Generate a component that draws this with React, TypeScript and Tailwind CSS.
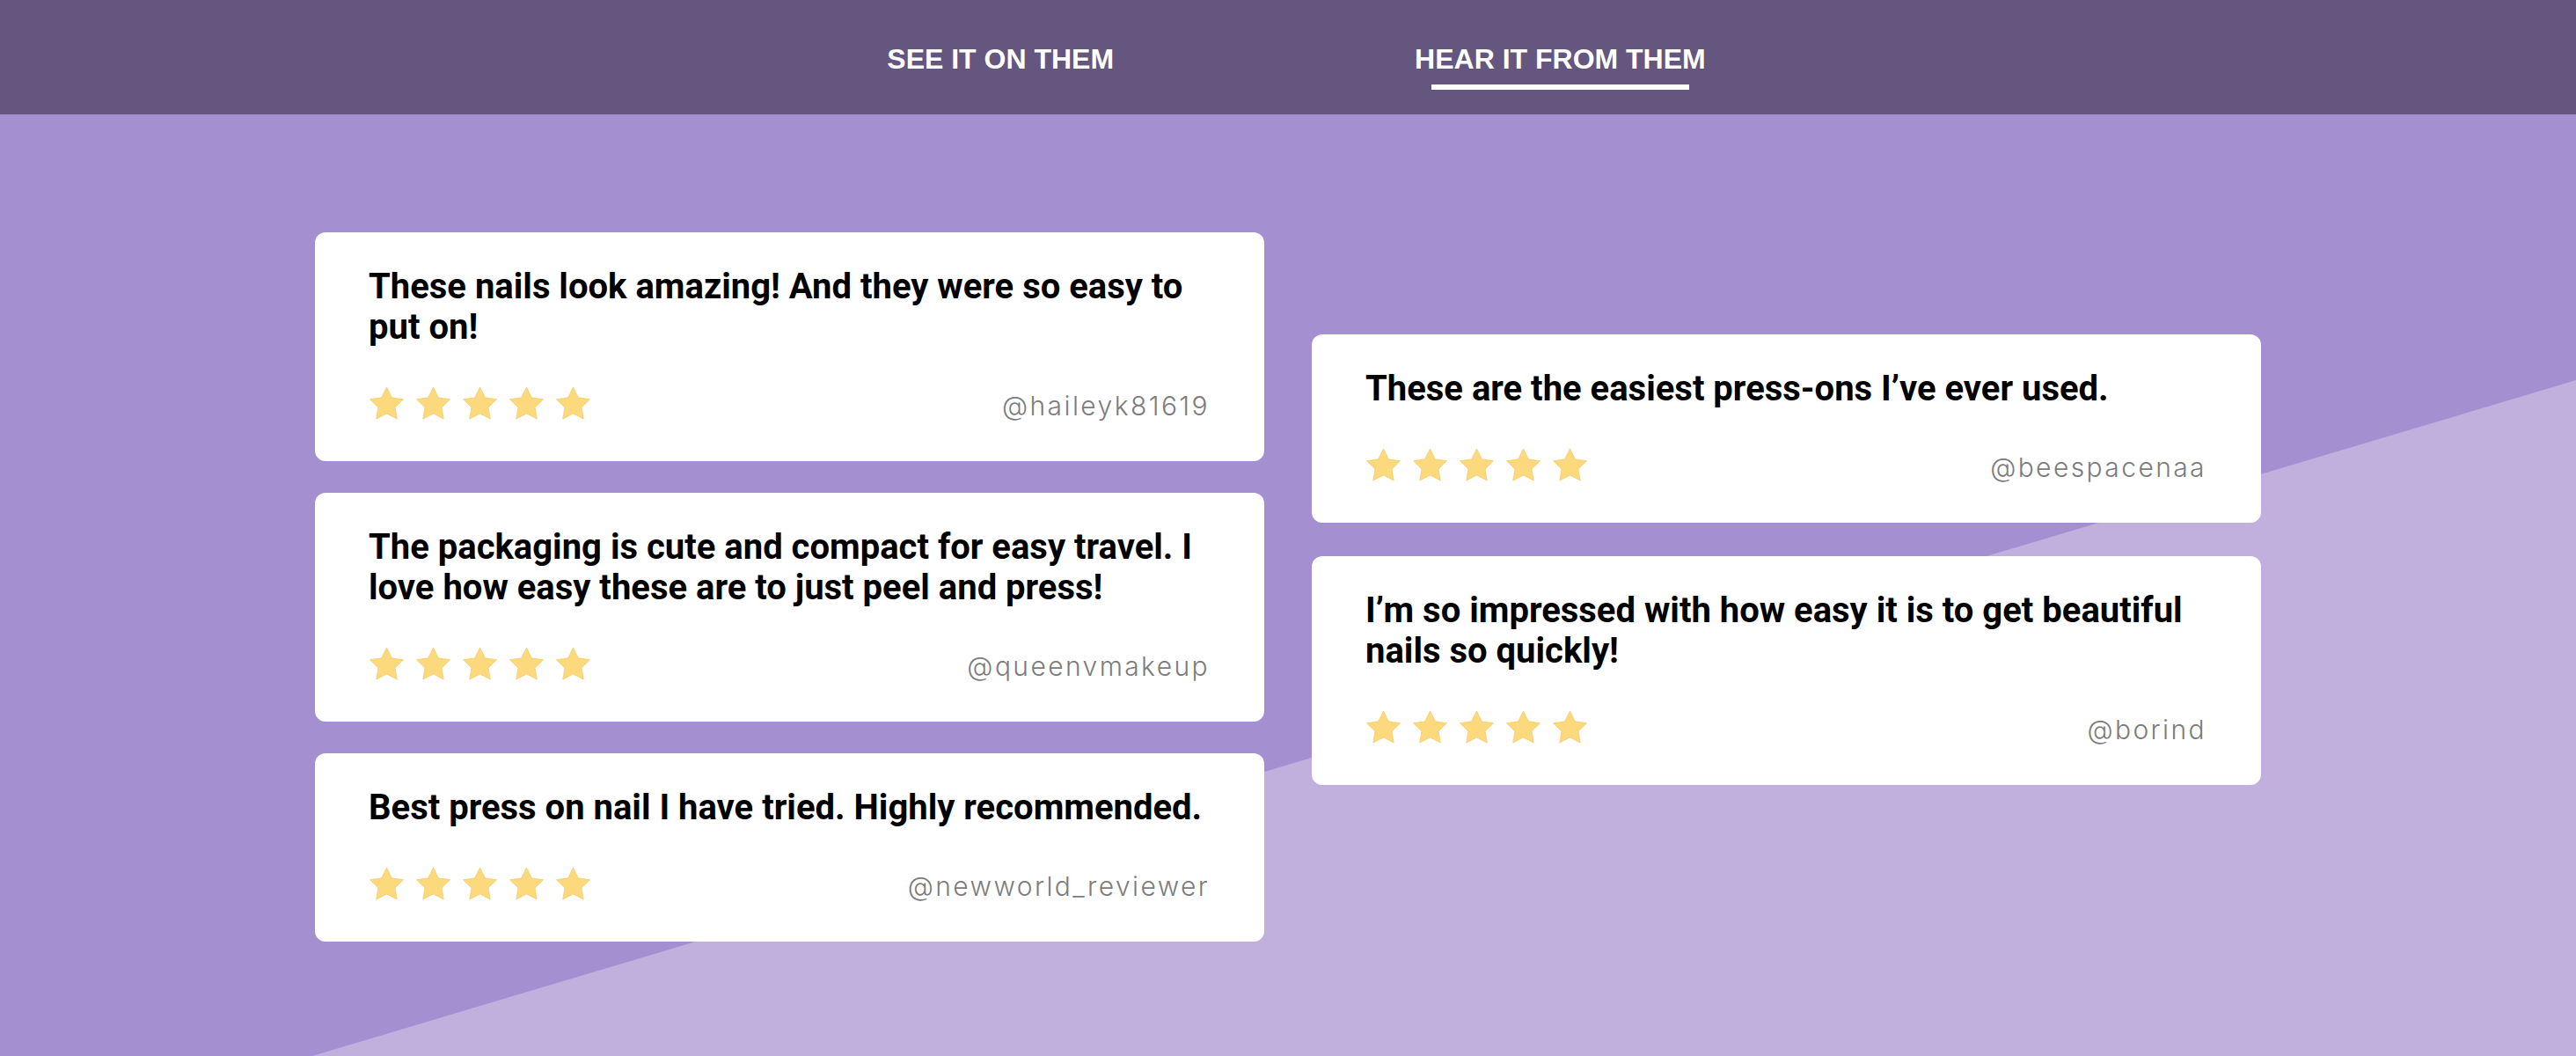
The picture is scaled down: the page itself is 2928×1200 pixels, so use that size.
const REVIEWS_LEFT = [
  { text: 'These nails look amazing! And they were so easy to put on!', handle: '@haileyk81619' },
  {
    text: 'The packaging is cute and compact for easy travel. I love how easy these are to just peel and press!',
    handle: '@queenvmakeup',
  },
  { text: 'Best press on nail I have tried. Highly recommended.', handle: '@newworld_reviewer' },
];

const REVIEWS_RIGHT = [
  { text: 'These are the easiest press-ons I\u2019ve ever used.', handle: '@beespacenaa' },
  { text: 'I\u2019m so impressed with how easy it is to get beautiful nails so quickly!', handle: '@borind' },
];

function Star() {
  return (
    <svg width="41" height="38" viewBox="1.5 1.5 21 20" className="shrink-0">
      <path
        d="M12 2l3.09 6.26L22 9.27l-5 4.87 1.18 6.88L12 17.77l-6.18 3.25L7 14.14 2 9.27l6.91-1.01L12 2z"
        fill="#fdd97d"
        stroke="#f1c65e"
        strokeWidth="0.35"
        strokeLinejoin="round"
      />
    </svg>
  );
}

function ReviewCard({ text, handle }: { text: string; handle: string }) {
  return (
    <div className="bg-white rounded-[12px] pl-[61px] pr-[62px] pt-[39px] pb-[47px]">
      <p className="font-['Roboto',sans-serif] font-bold text-[40px] leading-[46px] text-black">{text}</p>
      <div className="mt-[44px] h-[38px] flex items-center justify-between">
        <div className="flex gap-[12px]">
          {[0, 1, 2, 3, 4].map((i) => (
            <Star key={i} />
          ))}
        </div>
        <span className="font-['Inter',sans-serif] font-light text-[30px] tracking-[2.4px] text-[#7c7c7c] pt-[6px]">
          {handle}
        </span>
      </div>
    </div>
  );
}

export default function App() {
  return (
    <div className="w-full min-h-[1200px] bg-[#a48fd1]">
      <header className="h-[130px] bg-[#64567e] flex justify-center">
        <nav className="flex items-start gap-[342px] ml-[19px] pt-[49px] font-['Liberation_Sans',Arial,sans-serif] font-bold text-[32px] leading-[37px] text-white">
          <span>SEE IT ON THEM</span>
          <div className="flex flex-col items-center">
            <span>HEAR IT FROM THEM</span>
            <div className="mt-[10px] w-[293px] h-[6px] bg-white" />
          </div>
        </nav>
      </header>

      <section className="relative h-[1070px] overflow-hidden">
        <svg
          className="absolute inset-0 w-full h-full"
          viewBox="0 0 2928 1070"
          preserveAspectRatio="none"
        >
          <polygon points="355,1070 2928,302 2928,1070" fill="#c1b0de" />
        </svg>

        <div className="relative flex justify-center items-start gap-[54px] pt-[134px]">
          <div className="w-[1079px] flex flex-col gap-[36px]">
            {REVIEWS_LEFT.map((r) => (
              <ReviewCard key={r.handle} {...r} />
            ))}
          </div>
          <div className="w-[1079px] flex flex-col gap-[38px] mt-[116px]">
            {REVIEWS_RIGHT.map((r) => (
              <ReviewCard key={r.handle} {...r} />
            ))}
          </div>
        </div>
      </section>
    </div>
  );
}
